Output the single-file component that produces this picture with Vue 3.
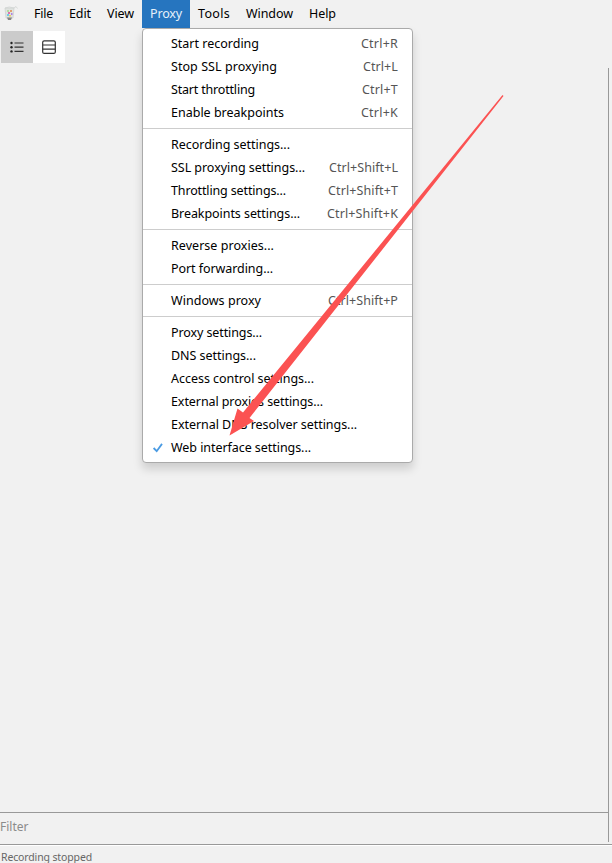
<script setup>
const menus = [
  { label: 'File', box: 35, text: 19 },
  { label: 'Edit', box: 38, text: 22 },
  { label: 'View', box: 43, text: 27 },
  { label: 'Proxy', box: 48, text: 32 },
  { label: 'Tools', box: 48, text: 32 },
  { label: 'Window', box: 63, text: 47 },
  { label: 'Help', box: 43, text: 27 }
]
const openMenu = 'Proxy'

const groups = [
  [
    { label: 'Start recording', w: 88, key: 'Ctrl+R', kw: 37 },
    { label: 'Stop SSL proxying', w: 106, key: 'Ctrl+L', kw: 35 },
    { label: 'Start throttling', w: 84, key: 'Ctrl+T', kw: 36 },
    { label: 'Enable breakpoints', w: 113, key: 'Ctrl+K', kw: 37 }
  ],
  [
    { label: 'Recording settings...', w: 119 },
    { label: 'SSL proxying settings...', w: 134, key: 'Ctrl+Shift+L', kw: 69 },
    { label: 'Throttling settings...', w: 115, key: 'Ctrl+Shift+T', kw: 70 },
    { label: 'Breakpoints settings...', w: 129, key: 'Ctrl+Shift+K', kw: 71 }
  ],
  [
    { label: 'Reverse proxies...', w: 103 },
    { label: 'Port forwarding...', w: 102 }
  ],
  [{ label: 'Windows proxy', w: 90, key: 'Ctrl+Shift+P', kw: 70 }],
  [
    { label: 'Proxy settings...', w: 91 },
    { label: 'DNS settings...', w: 85 },
    { label: 'Access control settings...', w: 143 },
    { label: 'External proxies settings...', w: 152 },
    { label: 'External DNS resolver settings...', w: 186 },
    { label: 'Web interface settings...', w: 140, checked: true }
  ]
]

// Tracks a label out or in so that it takes the given width.
const vFit = {
  mounted(el, { value }) {
    if (!value) return
    const natural = el.getBoundingClientRect().width
    el.style.letterSpacing = (value - natural) / el.textContent.length + 'px'
  }
}
</script>

<template>
  <div class="window">
    <header class="menubar">
      <svg class="logo" viewBox="0 0 26 28" width="26" height="28">
        <path d="M5 8h9l-1 10H6z" fill="#dfe3e0" stroke="#cfd3d1" stroke-width=".8" />
        <path d="M5 8q4-2 9 0M14 8l2-1.500 1.500 2" fill="none" stroke="#d2d6d5" stroke-width=".9" />
        <path d="M7 10h2v2H7z" fill="#b5dc9e" />
        <path d="M10 10h2v2h-2z" fill="#e0a070" />
        <path d="M8 12h2v2H8z" fill="#e070ae" />
        <path d="M11 13h1.500v2H11z" fill="#b080e0" />
        <path d="M7 14h2v2H7z" fill="#70cce8" />
        <path d="M9 15h2v1.500H9z" fill="#eccc60" />
        <path d="M7 17.500h5l-1 2.500H8z" fill="#858585" />
      </svg>
      <div
        v-for="m in menus"
        :key="m.label"
        class="menu-title"
        :class="{ active: m.label === openMenu }"
        :style="{ width: m.box + 'px' }"
      >
        <span v-fit="m.text">{{ m.label }}</span>
      </div>
    </header>

    <div class="toolbar">
      <button class="tool selected">
        <svg viewBox="0 0 32 32" width="32" height="32">
          <path d="M13.500 12h9M13.500 16.200h9M13.500 20.400h9" stroke="#333" stroke-width="1.200" />
          <g fill="#222">
            <circle cx="10.500" cy="12" r="1.200" />
            <circle cx="10.500" cy="16.200" r="1.200" />
            <circle cx="10.500" cy="20.400" r="1.200" />
          </g>
        </svg>
      </button>
      <button class="tool">
        <svg viewBox="0 0 32 32" width="32" height="32" fill="none" stroke="#333" stroke-width="1.200">
          <rect x="9.700" y="9.800" width="12.600" height="12.600" rx="1.500" />
          <path d="M9.700 14h12.600M9.700 18.200h12.600" />
        </svg>
      </button>
    </div>

    <main class="content">
      <div class="canvas"></div>
      <div class="filter"><span v-fit="28.5">Filter</span></div>
    </main>

    <footer class="status"><span v-fit="91">Recording stopped</span></footer>

    <div class="dropdown">
      <div v-for="(g, i) in groups" :key="i" class="group">
        <div v-for="item in g" :key="item.label" class="item">
          <span class="mark">
            <svg v-if="item.checked" viewBox="0 0 12 12" width="12" height="12">
              <path d="M1.600 6 4.700 9.200 10 1.900" fill="none" stroke="#4a9be3" stroke-width="1.800" />
            </svg>
          </span>
          <span v-fit="item.w" class="label">{{ item.label }}</span>
          <span v-if="item.key" v-fit="item.kw" class="shortcut">{{ item.key }}</span>
        </div>
      </div>
    </div>

    <svg class="arrow" viewBox="0 0 612 863" width="612" height="863">
      <path d="M502.500 95 503.500 96 249.500 418 254 421 229.500 435.500 237.500 408.500 243 412.500z" fill="#fb5252" />
    </svg>
  </div>
</template>

<style>
body {
  background: #f1f1f1;
}
</style>

<style scoped>
.window {
  position: relative;
  display: flex;
  flex-direction: column;
  width: 612px;
  height: 863px;
  overflow: hidden;
  background: #f1f1f1;
  color: #000;
  font-family: "Noto Sans", "Open Sans", sans-serif;
  font-size: 12.500px;
  white-space: nowrap;
}
.menubar {
  display: flex;
  flex: none;
  height: 28px;
}
.logo {
  flex: none;
}
.menu-title {
  box-sizing: border-box;
  flex: none;
  padding-left: 8px;
  line-height: 28px;
}
.menu-title.active {
  background: #2675bf;
  color: #e5f0fa;
}
.toolbar {
  display: flex;
  flex: none;
  height: 32px;
  padding: 3px 0 0 1px;
}
.tool {
  width: 32px;
  height: 32px;
  padding: 0;
  border: 0;
  background: #fff;
}
.tool.selected {
  background: #cbcbcb;
}
.tool svg {
  display: block;
}
.content {
  display: flex;
  flex: none;
  flex-direction: column;
  width: 608px;
  height: 774px;
  margin-top: 5px;
  border-right: 1px solid #999;
}
.canvas {
  flex: 1;
}
.filter {
  height: 29px;
  border-top: 1px solid #999;
  color: #8b8b8b;
  font-size: 12px;
  line-height: 28px;
}
.status {
  flex: none;
  height: 18px;
  margin-top: 2px;
  padding-left: 1px;
  border-top: 1px solid #999;
  box-shadow: inset 0 1px #fff;
  color: #666;
  font-size: 10.500px;
  line-height: 25px;
}
.dropdown {
  position: absolute;
  top: 28px;
  left: 142px;
  box-sizing: border-box;
  width: 271px;
  padding: 3px 0;
  border: 1px solid #aaa;
  border-radius: 4px;
  background: #fff;
  box-shadow: 0 6px 10px rgba(0, 0, 0, 0.15);
}
.group + .group {
  margin-top: 4px;
  padding-top: 4px;
  border-top: 1px solid #cdcdcd;
}
.item {
  display: flex;
  align-items: center;
  height: 23px;
  padding-right: 14px;
  line-height: 23px;
}
.mark {
  display: flex;
  width: 19px;
  padding-left: 9px;
}
.shortcut {
  margin-left: auto;
  color: #555;
}
.arrow {
  position: absolute;
  top: 0;
  left: 0;
  pointer-events: none;
}
</style>
